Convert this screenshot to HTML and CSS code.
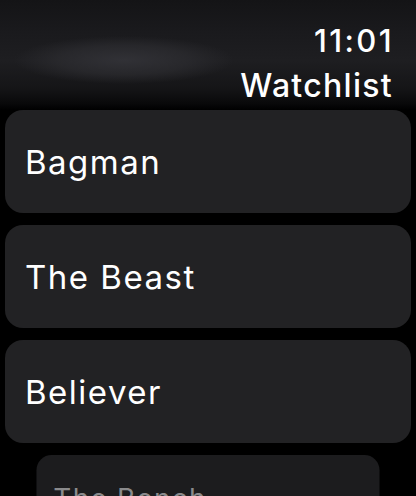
FILE: index.html
```html
<!doctype html>
<html lang="en">
<head>
  <meta charset="utf-8">
  <title>Watchlist</title>
  <link rel="stylesheet" href="styles.css">
</head>
<body>

  <div class="header">
    <div class="time">11:01</div>
    <div class="title">Watchlist</div>
  </div>

  <div class="list">
    <div class="row">Bagman</div>
    <div class="row">The Beast</div>
    <div class="row">Believer</div>
    <div class="row row-edge">The Bench</div>
  </div>

</body>
</html>
```

FILE: styles.css
```css
body {
  margin: 0;
  background: #000;
  color: #fff;
  font-family: Inter, "Noto Sans", sans-serif;
  width: 416px;
  height: 496px;
  overflow: hidden;
}
/* blurred title bar: soft lit band behind the clock */
.header {
  height: 110px;
  box-sizing: border-box;
  padding: 24px 24px 0 0;
  display: flex;
  flex-direction: column;
  align-items: flex-end;
  background:
    radial-gradient(ellipse 110px 24px at 124px 60px, rgba(50,50,55,0.95) 0%, rgba(44,44,48,0.7) 60%, rgba(30,30,33,0) 100%),
    linear-gradient(to bottom, #141416 0%, #1a1a1d 30%, #1e1e21 55%, #151517 80%, #09090a 94%, #000 100%);
}
.time {
  font-size: 31px;
  font-weight: 500;
  line-height: 34px;
  letter-spacing: 2.4px;
  margin-right: -2px;
}
.title {
  font-size: 32px;
  font-weight: 500;
  line-height: 40px;
  letter-spacing: 1.3px;
  margin-top: 8px;
  margin-right: -1px;
}
.list {
  display: flex;
  flex-direction: column;
  gap: 12px;
  padding: 0 5px;
}
.row {
  height: 103px;
  border-radius: 18px;
  background: #222224;
  display: flex;
  align-items: center;
  padding-left: 20px;
  font-size: 33px;
  letter-spacing: 1.5px;
}
.row-edge {
  transform: scale(0.845);
  transform-origin: top center;
  color: #8a8a8c;
  background: #1c1c1e;
}
```
